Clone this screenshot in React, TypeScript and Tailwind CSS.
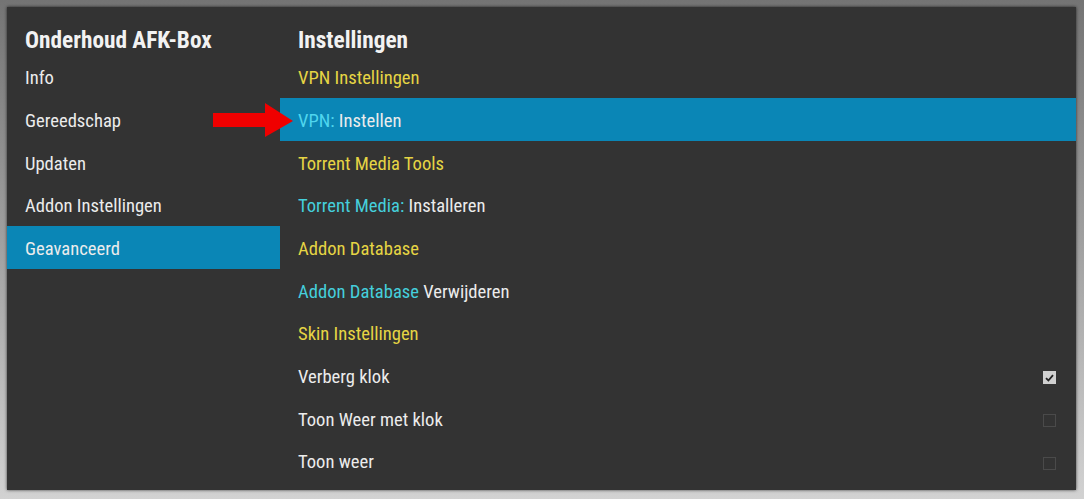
import React from "react";

const YEL = "text-[#e6d544]";
const CYA = "text-[#45cfdc]";

function Check({ on }: { on: boolean }) {
  if (on)
    return (
      <div className="w-[13px] h-[13px] bg-[#d0d0d0] flex items-center justify-center">
        <svg width="9" height="8" viewBox="0 0 9 8">
          <path d="M1 4.2 L3.4 6.5 L8 1.2" stroke="#222" strokeWidth="1.8" fill="none" />
        </svg>
      </div>
    );
  return <div className="w-[13px] h-[13px] border border-[#4a4a4a]" />;
}

const row = "h-[42.7px] flex items-center pl-[18px] pt-[5px]";

export default function App() {
  const left = ["Info", "Gereedschap", "Updaten", "Addon Instellingen", "Geavanceerd"];
  return (
    <div
      className="w-[1084px] h-[499px] bg-gradient-to-b from-[#747474] to-[#d2d2d2] pt-[7px] pl-[7px] pr-[8px]"
      style={{ fontFamily: "Roboto, 'Noto Sans', sans-serif" }}
    >
      <div className="relative h-[483px] bg-[#333333] shadow-[0_0_3px_rgba(0,0,0,0.7)] flex text-[18.6px] text-[#ececec] [font-stretch:condensed]">
        <div className="w-[273px] flex flex-col">
          <div className="h-[48.3px] pt-[18px] pl-[18px] text-[23.3px] font-bold leading-[30px] text-[#f2f2f2]">
            Onderhoud AFK-Box
          </div>
          {left.map((t) => (
            <div key={t} className={`${row} ${t === "Geavanceerd" ? "bg-[#0a86b6]" : ""}`}>
              {t}
            </div>
          ))}
        </div>
        <div className="flex-1 flex flex-col">
          <div className="h-[48.3px] pt-[18px] pl-[18px] text-[23.3px] font-bold leading-[30px] text-[#f2f2f2]">
            Instellingen
          </div>
          <div className={`${row} ${YEL}`}>VPN Instellingen</div>
          <div className={`${row} bg-[#0a86b6]`}>
            <span className="text-[#4fd6ee]">VPN:</span>&nbsp;Instellen
          </div>
          <div className={`${row} ${YEL}`}>Torrent Media Tools</div>
          <div className={row}>
            <span className={CYA}>Torrent Media:</span>&nbsp;Installeren
          </div>
          <div className={`${row} ${YEL}`}>Addon Database</div>
          <div className={row}>
            <span className={CYA}>Addon Database</span>&nbsp;Verwijderen
          </div>
          <div className={`${row} ${YEL}`}>Skin Instellingen</div>
          <div className={`${row} justify-between pr-[20px]`}>
            <span>Verberg klok</span>
            <Check on />
          </div>
          <div className={`${row} justify-between pr-[20px]`}>
            <span>Toon Weer met klok</span>
            <Check on={false} />
          </div>
          <div className={`${row} justify-between pr-[20px]`}>
            <span>Toon weer</span>
            <Check on={false} />
          </div>
        </div>
        <svg
          className="absolute left-[206px] top-[96px]"
          width="82"
          height="34"
          viewBox="0 0 82 34"
        >
          <path d="M0 10 L52 10 L52 0 L80 18 L52 34 L52 24 L0 24 Z" fill="#f00000" />
        </svg>
      </div>
    </div>
  );
}
